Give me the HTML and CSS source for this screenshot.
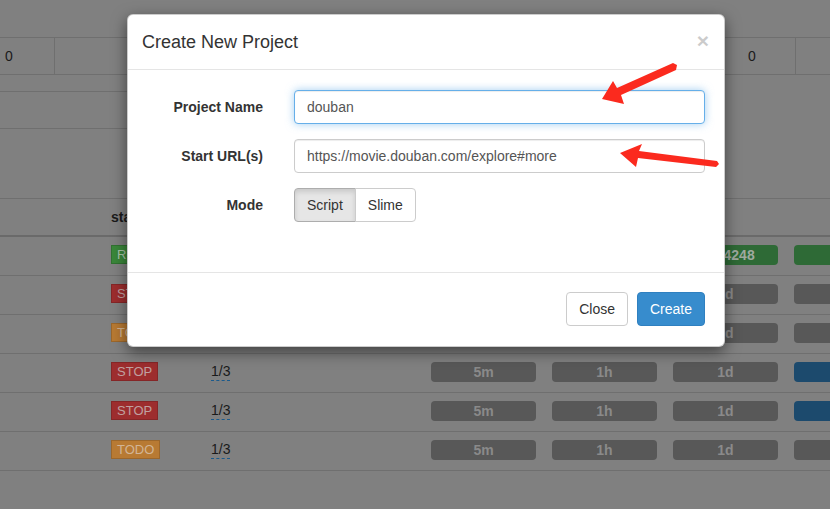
FILE: index.html
```html
<!DOCTYPE html>
<html lang="en">
<head>
<meta charset="utf-8">
<title>Create New Project</title>
<link rel="stylesheet" href="styles.css">
</head>
<body>
<div class="page">
  <div class="top-space"></div>
  <div class="stats-row">
    <div class="stat stat-first">0</div>
    <div class="stat stat-mid"></div>
    <div class="stat stat-last">0</div>
    <div class="stat stat-end"></div>
  </div>
  <div class="sub-row sub-short"></div>
  <div class="sub-row"></div>
  <div class="spacer"></div>

  <div class="tbl">
    <div class="thead">
      <div class="th"></div>
      <div class="th">status</div>
    </div>

    <div class="trow">
      <div class="cell"></div>
      <div class="cell"><span class="label label-green">RUNNING</span></div>
      <div class="cell"></div>
      <div class="cell"><div class="bar"></div></div>
      <div class="cell"><div class="bar"></div></div>
      <div class="cell"><div class="bar bar-green">14/24248</div></div>
      <div class="cell"><div class="bar bar-green"></div></div>
    </div>
    <div class="trow">
      <div class="cell"></div>
      <div class="cell"><span class="label label-red">STOP</span></div>
      <div class="cell"></div>
      <div class="cell"><div class="bar"></div></div>
      <div class="cell"><div class="bar"></div></div>
      <div class="cell"><div class="bar">1d</div></div>
      <div class="cell"><div class="bar"></div></div>
    </div>
    <div class="trow">
      <div class="cell"></div>
      <div class="cell"><span class="label label-orange">TODO</span></div>
      <div class="cell"></div>
      <div class="cell"><div class="bar"></div></div>
      <div class="cell"><div class="bar"></div></div>
      <div class="cell"><div class="bar">1d</div></div>
      <div class="cell"><div class="bar"></div></div>
    </div>
    <div class="trow">
      <div class="cell"></div>
      <div class="cell"><span class="label label-red">STOP</span></div>
      <div class="cell"><span class="rate">1/3</span></div>
      <div class="cell"><div class="bar">5m</div></div>
      <div class="cell"><div class="bar">1h</div></div>
      <div class="cell"><div class="bar">1d</div></div>
      <div class="cell"><div class="bar bar-blue"></div></div>
    </div>
    <div class="trow">
      <div class="cell"></div>
      <div class="cell"><span class="label label-red">STOP</span></div>
      <div class="cell"><span class="rate">1/3</span></div>
      <div class="cell"><div class="bar">5m</div></div>
      <div class="cell"><div class="bar">1h</div></div>
      <div class="cell"><div class="bar">1d</div></div>
      <div class="cell"><div class="bar bar-blue"></div></div>
    </div>
    <div class="trow">
      <div class="cell"></div>
      <div class="cell"><span class="label label-orange">TODO</span></div>
      <div class="cell"><span class="rate">1/3</span></div>
      <div class="cell"><div class="bar">5m</div></div>
      <div class="cell"><div class="bar">1h</div></div>
      <div class="cell"><div class="bar">1d</div></div>
      <div class="cell"><div class="bar"></div></div>
    </div>
  </div>
</div>

<div class="modal">
  <div class="modal-header">
    <h4 class="modal-title">Create New Project</h4>
    <span class="close">&times;</span>
  </div>
  <div class="modal-body">
    <div class="form-row">
      <label class="form-label">Project Name</label>
      <input class="form-control focus" type="text" value="douban">
    </div>
    <div class="form-row">
      <label class="form-label">Start URL(s)</label>
      <input class="form-control" type="text" value="https://movie.douban.com/explore#more">
    </div>
    <div class="form-row">
      <label class="form-label">Mode</label>
      <div class="btn-group">
        <button class="btn active">Script</button>
        <button class="btn">Slime</button>
      </div>
    </div>
  </div>
  <div class="modal-footer">
    <button class="btn btn-single">Close</button>
    <button class="btn btn-primary">Create</button>
  </div>
</div>

<svg class="arrows" viewBox="0 0 830 509" width="830" height="509">
  <polygon fill="#fb2a1e" points="602,99 613,81 617,88 673,63 677,65 676,70 621,95 624,104"/>
  <polygon fill="#fb2a1e" points="620,153 642,144 639,151 717,161 719,164 716,167 638,158 636,167"/>
</svg>
</body>
</html>
```

FILE: styles.css
```css
html, body {
  margin: 0;
  padding: 0;
}

body {
  position: relative;
  width: 830px;
  height: 509px;
  overflow: hidden;
  background: #808080;
  font-family: "Liberation Sans", Arial, sans-serif;
  font-size: 14px;
  color: #1a1a1a;
}

.page {
  width: 830px;
  overflow: hidden;
}

.top-space {
  height: 37px;
  border-bottom: 1px solid #6f6f6f;
}

.stats-row {
  display: flex;
  height: 36px;
  border-bottom: 1px solid #6f6f6f;
}

.stat {
  display: flex;
  align-items: center;
  box-sizing: border-box;
  height: 36px;
}

.stat-first {
  width: 55px;
  padding-left: 5px;
  border-right: 1px solid #6f6f6f;
}

.stat-mid {
  width: 645px;
}

.stat-last {
  width: 96px;
  padding-left: 48px;
  border-right: 1px solid #6f6f6f;
}

.stat-end {
  flex: 1;
}

.sub-row {
  width: 700px;
  height: 36px;
  border-bottom: 1px solid #6f6f6f;
}

.sub-short {
  height: 16px;
}

.spacer {
  height: 69px;
  border-bottom: 1px solid #6f6f6f;
}

.thead,
.trow {
  display: grid;
  grid-template-columns: 111px 100px 220px 121px 121px 121px 36px;
  width: 830px;
}

.thead {
  height: 36px;
  align-items: center;
  border-bottom: 2px solid #6a6a6a;
  font-weight: bold;
}

.trow {
  height: 30px;
  padding-top: 8px;
  align-items: start;
  border-bottom: 1px solid #6f6f6f;
}

.cell {
  min-width: 0;
}

.trow .cell:last-child .bar {
  width: 36px;
  border-radius: 4px 0 0 4px;
}

.label {
  display: inline-block;
  box-sizing: border-box;
  height: 19px;
  line-height: 17px;
  padding: 0 5px;
  font-size: 13px;
  border: 1px solid rgba(0, 0, 0, 0.15);
}

.label-green {
  background: #3a873a;
  color: #a9c4a9;
}

.label-red {
  background: #9d2d2e;
  color: #c0a0a0;
}

.label-orange {
  background: #b87a33;
  color: #d2b596;
}

.rate {
  display: inline-block;
  line-height: 17px;
  margin-top: 1px;
  border-bottom: 1px dashed #1a5a8c;
  color: #1a1a1a;
}

.bar {
  width: 105px;
  height: 20px;
  line-height: 20px;
  border-radius: 4px;
  background: #585858;
  color: #8a8a8a;
  font-weight: bold;
  font-size: 14px;
  text-align: center;
  overflow: hidden;
  white-space: nowrap;
}

.bar-green {
  background: #2e6a36;
  color: #9fa99f;
}

.bar-blue {
  background: #1c4a6d;
}

/* Modal */
.modal {
  position: absolute;
  left: 127px;
  top: 14px;
  width: 598px;
  box-sizing: border-box;
  background: #fff;
  border: 1px solid rgba(0, 0, 0, 0.2);
  border-radius: 6px;
  box-shadow: 0 5px 15px rgba(0, 0, 0, 0.5);
  color: #333;
}

.modal-header {
  display: flex;
  justify-content: space-between;
  align-items: center;
  padding: 15px 15px 15px 14px;
  border-bottom: 1px solid #e5e5e5;
}

.modal-title {
  margin: 0;
  font-size: 18px;
  font-weight: normal;
  line-height: 24px;
}

.close {
  font-size: 21px;
  font-weight: bold;
  line-height: 1;
  color: #000;
  opacity: 0.2;
  margin-top: -4px;
}

.modal-body {
  padding: 20px 19px 20px 20px;
}

.form-row {
  display: grid;
  grid-template-columns: 115px 1fr;
  column-gap: 31px;
  align-items: center;
  margin-bottom: 15px;
}

.form-label {
  text-align: right;
  font-weight: bold;
  font-size: 14px;
  color: #333;
}

.form-control {
  display: block;
  width: 100%;
  height: 34px;
  box-sizing: border-box;
  padding: 6px 12px;
  font-family: "Liberation Sans", Arial, sans-serif;
  font-size: 14px;
  color: #555;
  background: #fff;
  border: 1px solid #ccc;
  border-radius: 4px;
  box-shadow: inset 0 1px 1px rgba(0, 0, 0, 0.075);
  outline: none;
}

.form-control.focus {
  border-color: #66afe9;
  box-shadow: inset 0 1px 1px rgba(0, 0, 0, 0.075), 0 0 8px rgba(102, 175, 233, 0.6);
}

.btn-group {
  display: flex;
}

.btn {
  height: 34px;
  box-sizing: border-box;
  padding: 6px 12px;
  font-family: "Liberation Sans", Arial, sans-serif;
  font-size: 14px;
  line-height: 20px;
  color: #333;
  background: #fff;
  border: 1px solid #ccc;
  border-radius: 4px;
}

.btn-group .btn:first-child {
  border-radius: 4px 0 0 4px;
}

.btn-group .btn + .btn {
  margin-left: -1px;
  border-radius: 0 4px 4px 0;
}

.btn.active {
  background: #e6e6e6;
  border-color: #adadad;
  box-shadow: inset 0 3px 5px rgba(0, 0, 0, 0.125);
}

.modal-footer {
  display: flex;
  justify-content: flex-end;
  gap: 9px;
  margin-top: 15px;
  padding: 19px 19px 20px 20px;
  border-top: 1px solid #e5e5e5;
}

.btn-primary {
  color: #fff;
  background: #378ccd;
  border-color: #2f80c0;
}

.arrows {
  position: absolute;
  left: 0;
  top: 0;
  pointer-events: none;
}
```
